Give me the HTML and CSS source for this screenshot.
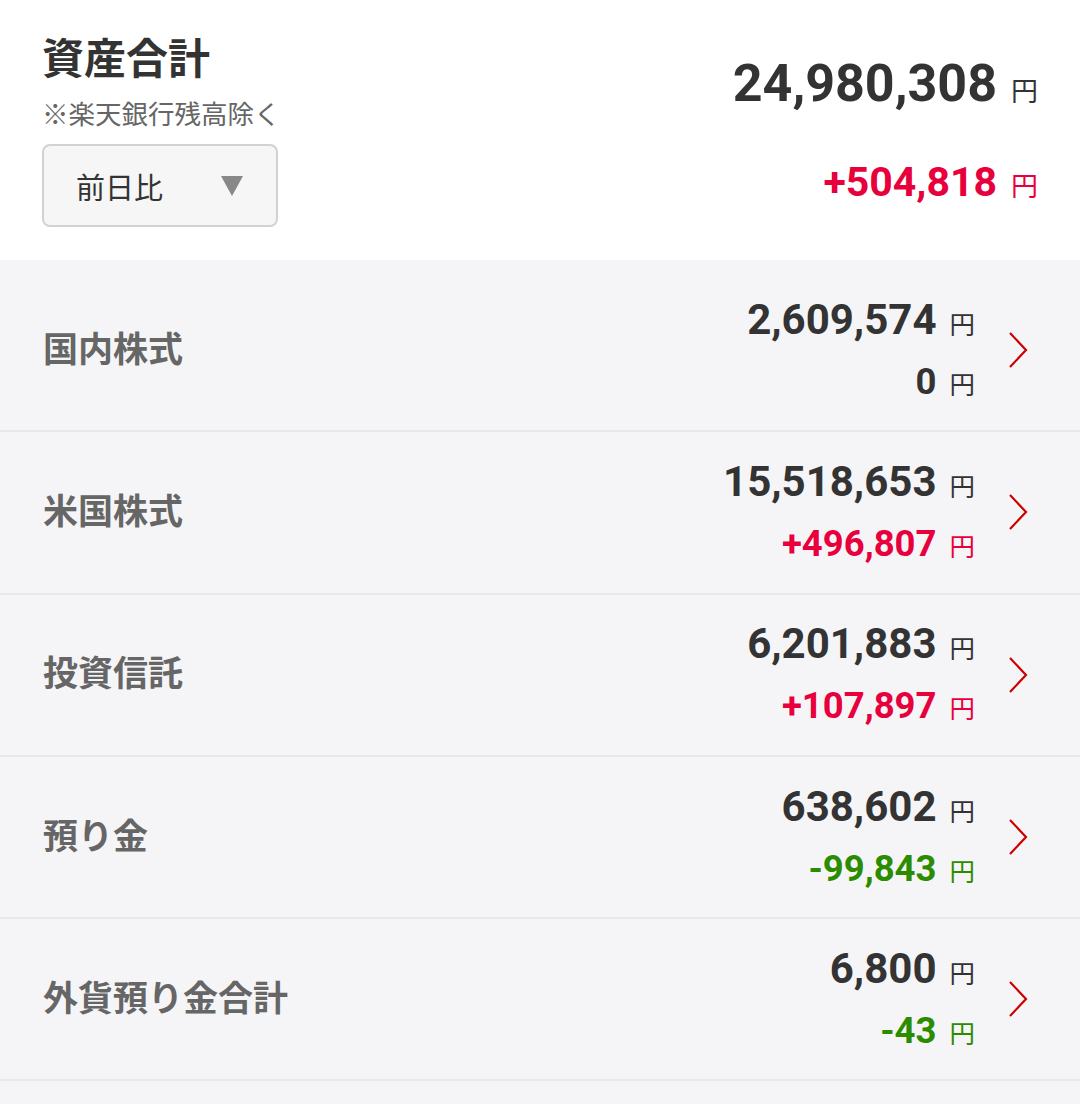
FILE: index.html
```html
<!DOCTYPE html>
<html lang="ja">

<head>
    <meta charset="utf-8">
    <title>資産合計</title>

    <link rel="stylesheet" href="styles.css">
</head>

<body>

    <div class="summary">
        <div class="summary-left">
            <h1 class="title">資産合計</h1>
            <p class="note">※楽天銀行残高除く</p>
            <div class="select">
                <span>前日比</span>
                <svg class="select-arrow" width="22" height="20" viewBox="0 0 22 20"><polygon points="0,0 22,0 11,20" fill="#888"/></svg>
            </div>
        </div>
        <div class="summary-right">
            <div class="total">24,980,308<span class="yen">円</span></div>
            <div class="total-diff plus">+504,818<span class="yen">円</span></div>
        </div>
    </div>

    <!-- 資産の内訳 -->
    <ul class="assets">
        <li class="asset">
            <span class="asset-name">国内株式</span>
            <div class="asset-values">
                <div class="amount">2,609,574<span class="yen">円</span></div>
                <div class="change">0<span class="yen">円</span></div>
            </div>
            <svg class="chevron" width="20" height="36" viewBox="0 0 20 36"><polyline points="2,1 18,18 2,35" fill="none" stroke="#cc0000" stroke-width="2.2"/></svg>
        </li>
        <li class="asset">
            <span class="asset-name">米国株式</span>
            <div class="asset-values">
                <div class="amount">15,518,653<span class="yen">円</span></div>
                <div class="change plus">+496,807<span class="yen">円</span></div>
            </div>
            <svg class="chevron" width="20" height="36" viewBox="0 0 20 36"><polyline points="2,1 18,18 2,35" fill="none" stroke="#cc0000" stroke-width="2.2"/></svg>
        </li>
        <li class="asset">
            <span class="asset-name">投資信託</span>
            <div class="asset-values">
                <div class="amount">6,201,883<span class="yen">円</span></div>
                <div class="change plus">+107,897<span class="yen">円</span></div>
            </div>
            <svg class="chevron" width="20" height="36" viewBox="0 0 20 36"><polyline points="2,1 18,18 2,35" fill="none" stroke="#cc0000" stroke-width="2.2"/></svg>
        </li>
        <li class="asset">
            <span class="asset-name">預り金</span>
            <div class="asset-values">
                <div class="amount">638,602<span class="yen">円</span></div>
                <div class="change minus">-99,843<span class="yen">円</span></div>
            </div>
            <svg class="chevron" width="20" height="36" viewBox="0 0 20 36"><polyline points="2,1 18,18 2,35" fill="none" stroke="#cc0000" stroke-width="2.2"/></svg>
        </li>
        <li class="asset">
            <span class="asset-name">外貨預り金合計</span>
            <div class="asset-values">
                <div class="amount">6,800<span class="yen">円</span></div>
                <div class="change minus">-43<span class="yen">円</span></div>
            </div>
            <svg class="chevron" width="20" height="36" viewBox="0 0 20 36"><polyline points="2,1 18,18 2,35" fill="none" stroke="#cc0000" stroke-width="2.2"/></svg>
        </li>
    </ul>

</body>

</html>
```

FILE: styles.css
```css
* {
    box-sizing: border-box;
}

body {
    margin: 0;
    background-color: #f5f5f7;
    font-family: Roboto, "Noto Sans CJK JP", sans-serif;
    color: #333;
}

/* 上部の合計 */
.summary {
    display: flex;
    justify-content: space-between;
    height: 260px;
    padding: 32px 42px 0 42px;
    background-color: #fff;
}

.title {
    margin: 0;
    font-size: 42px;
    line-height: 56px;
    font-weight: 700;
    color: #333;
}

.note {
    margin: 10px 0 0 0;
    font-size: 26.5px;
    line-height: 34px;
    color: #666;
}

.select {
    display: flex;
    align-items: center;
    justify-content: space-between;
    width: 236px;
    height: 83px;
    margin-top: 12px;
    padding: 0 33px 0 32px;
    border: 2px solid #d2d2d2;
    border-radius: 8px;
    background-color: #f6f6f6;
    font-size: 29px;
    color: #333;
}

.summary-right {
    display: flex;
    flex-direction: column;
    align-items: flex-end;
}

.total {
    margin-top: 20px;
    font-size: 52px;
    line-height: 64px;
    font-weight: 700;
}

.total-diff {
    margin-top: 33px;
    font-size: 41px;
    line-height: 50px;
    font-weight: 700;
}

.total .yen,
.total-diff .yen {
    margin-left: 14px;
    font-size: 27px;
    font-weight: 400;
}

.plus {
    color: #e8003d;
}

.minus {
    color: #2b8c00;
}

/* 資産の一覧 */
.assets {
    list-style-type: none;
    margin: 0;
    padding: 10px 0 0 0;
}

.asset {
    display: flex;
    align-items: center;
    height: 162.3px;
    padding: 0 52px 0 43px;
    border-bottom: 2px solid #e8e8ea;
}

.asset-name {
    flex: 1;
    padding-bottom: 8px;
    font-size: 35px;
    font-weight: 700;
    color: #666;
}

.asset-values {
    display: flex;
    flex-direction: column;
    align-items: flex-end;
    margin-top: 4px;
}

.amount {
    font-size: 42px;
    line-height: 54px;
    font-weight: 700;
}

.change {
    margin-top: 3px;
    font-size: 36.5px;
    line-height: 54px;
    font-weight: 700;
}

.amount .yen,
.change .yen {
    margin-left: 13px;
    font-size: 25.5px;
    font-weight: 400;
}

.chevron {
    margin-left: 33px;
}
```
